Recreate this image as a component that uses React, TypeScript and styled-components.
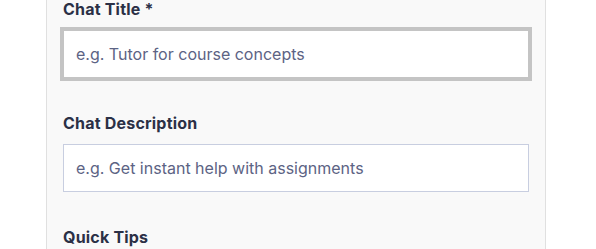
import React from 'react';
import styled, { createGlobalStyle, css } from 'styled-components';

const GlobalStyle = createGlobalStyle`
  html, body {
    margin: 0;
    padding: 0;
    background: #ffffff;
    font-family: Inter, "Noto Sans", sans-serif;
    overflow: hidden;
  }
  * {
    box-sizing: border-box;
  }
`;

const Page = styled.div`
  width: 596px;
  height: 249px;
  padding-left: 46px;
  background: #ffffff;
`;

const Panel = styled.div`
  width: 500px;
  min-height: 100%;
  background: #f9f9f9;
  border-left: 1px solid #e0e0e0;
  border-right: 1px solid #e0e0e0;
  padding: 0 16px;
`;

const FormGroup = styled.div`
  display: flex;
  flex-direction: column;
  margin-bottom: 36px;
`;

const Label = styled.label`
  font-size: 16px;
  line-height: 18px;
  font-weight: 700;
  letter-spacing: 0.2px;
  color: #2b3046;
  margin-bottom: 12px;
`;

const TextInput = styled.input<{ $focused?: boolean }>`
  width: 466px;
  height: 48px;
  padding: 0 12px;
  font-family: Inter, "Noto Sans", sans-serif;
  font-size: 16px;
  color: #2b3046;
  caret-color: #1a1a1a;
  background: #ffffff;
  border: 1px solid #c8cee0;
  border-radius: 0;
  outline: none;

  &::placeholder {
    color: #5c6384;
    opacity: 1;
  }

  ${({ $focused }) =>
    $focused &&
    css`
      border-color: #c4c4c4;
      box-shadow: 0 0 0 3px #c4c4c4;
    `}
`;

export default function App(): JSX.Element {
  return (
    <>
      <GlobalStyle />
      <Page>
        <Panel>
          <FormGroup>
            <Label htmlFor="chat-title">Chat Title *</Label>
            <TextInput
              id="chat-title"
              $focused
              autoFocus
              placeholder="e.g. Tutor for course concepts"
            />
          </FormGroup>

          <FormGroup>
            <Label htmlFor="chat-description">Chat Description</Label>
            <TextInput
              id="chat-description"
              placeholder="e.g. Get instant help with assignments"
            />
          </FormGroup>

          <FormGroup>
            <Label>Quick Tips</Label>
          </FormGroup>
        </Panel>
      </Page>
    </>
  );
}
